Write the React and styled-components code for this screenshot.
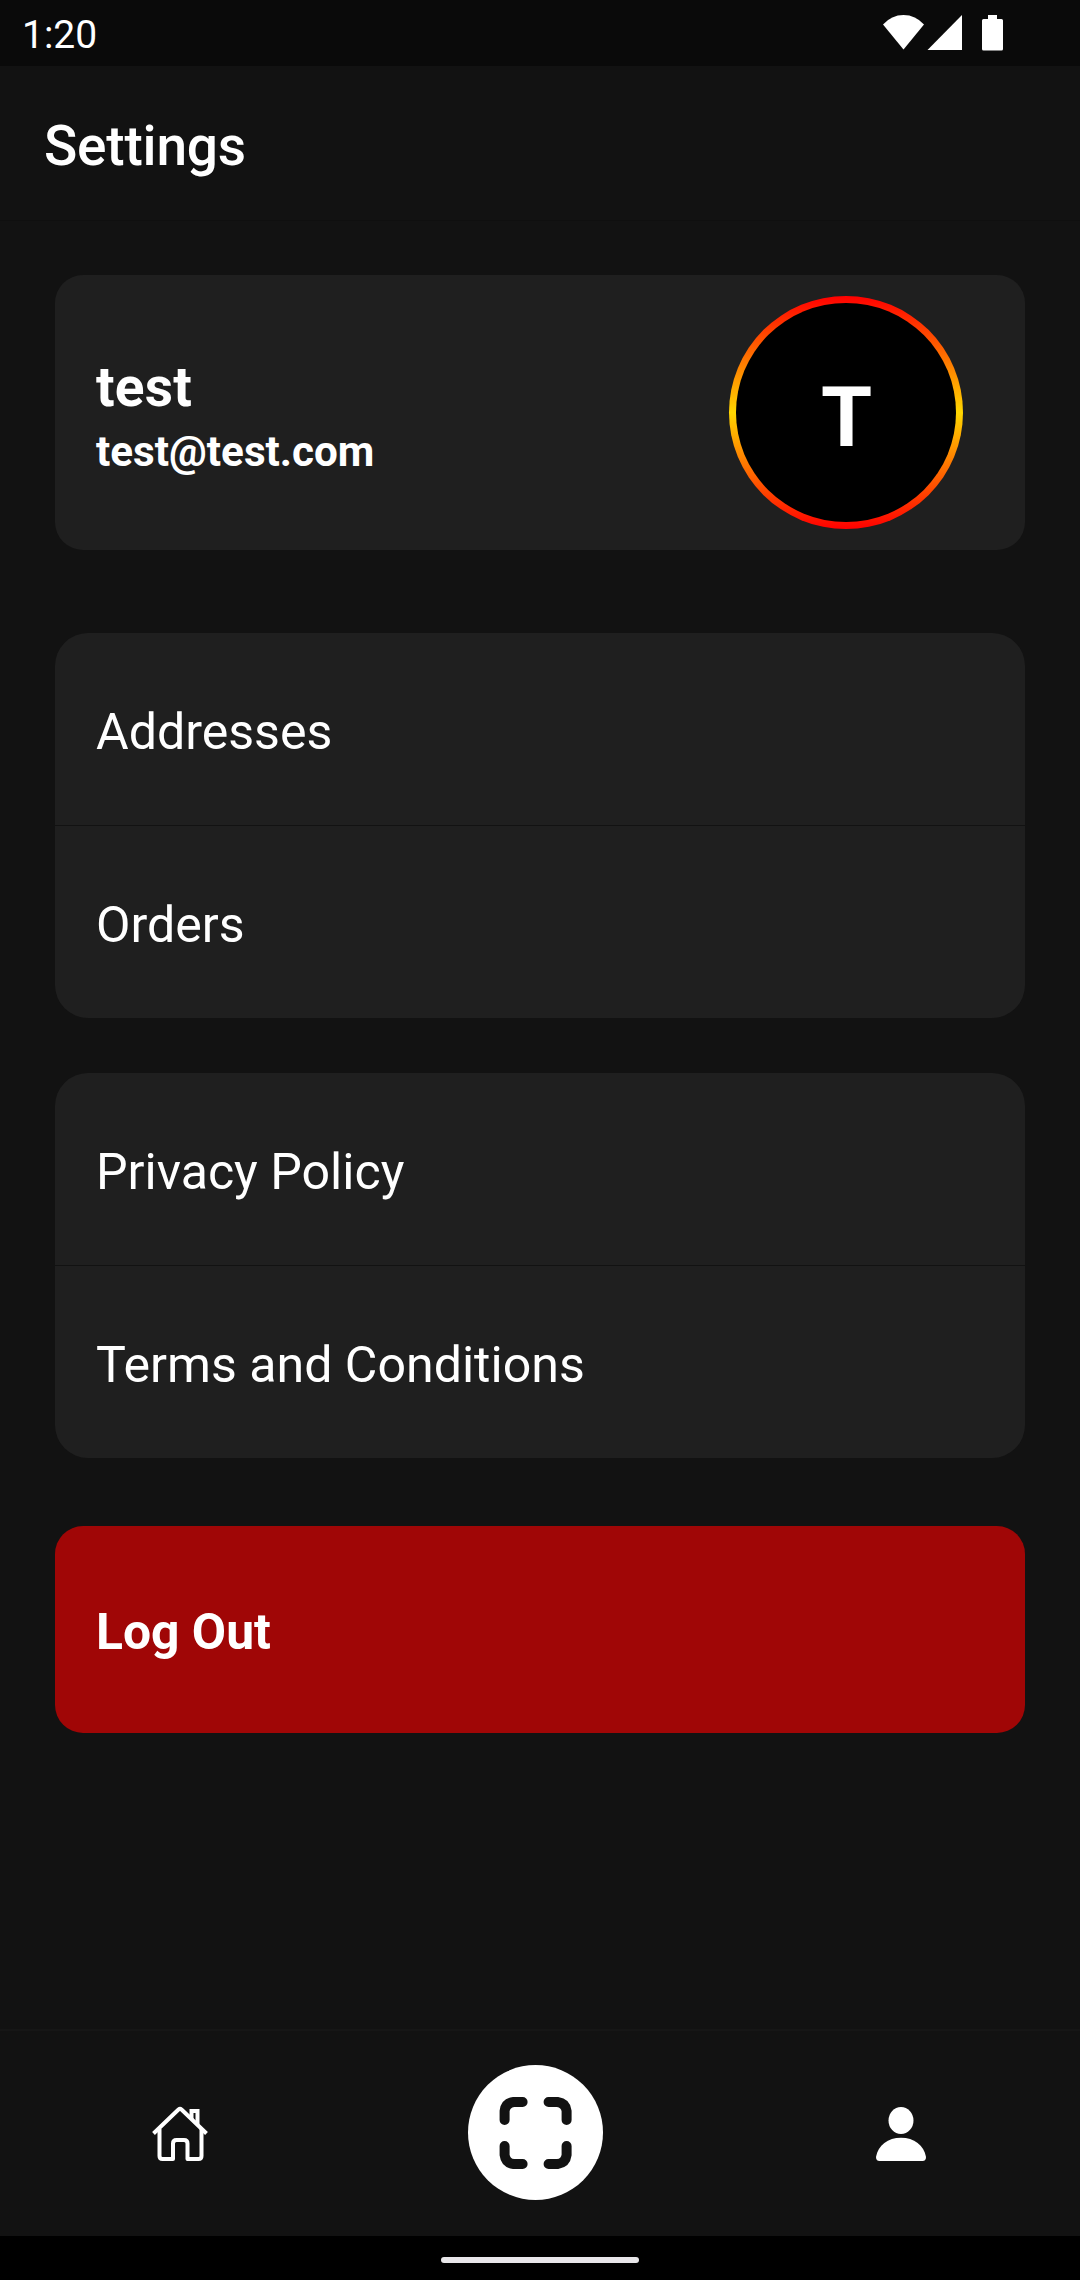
import React from "react";
import styled, { createGlobalStyle } from "styled-components";

const GlobalStyle = createGlobalStyle`
  * { box-sizing: border-box; }
  body { margin: 0; background: #121212; }
`;

const Screen = styled.div`
  display: flex;
  flex-direction: column;
  width: 1080px;
  height: 2280px;
  background: #121212;
  color: #fff;
  font-family: Roboto, "Liberation Sans", sans-serif;
`;

const StatusBar = styled.div`
  display: flex;
  align-items: flex-start;
  justify-content: space-between;
  height: 66px;
  padding: 14px 76px 0 22px;
  background: #0a0a0a;
`;

const Clock = styled.span`
  margin-top: -2px;
  font-size: 39px;
  line-height: 46px;
`;

const Header = styled.header`
  display: flex;
  align-items: center;
  height: 155px;
  padding: 6px 44px 0;
  border-bottom: 1px solid #0f0f0f;
`;

const Title = styled.h1`
  margin: 0;
  font-size: 55px;
  font-weight: 500;
  line-height: 64px;
  letter-spacing: -0.2px;
`;

const Content = styled.main`
  display: flex;
  flex: 1;
  flex-direction: column;
  padding: 54px 55px 0;
`;

const ProfileCard = styled.section`
  display: flex;
  align-items: center;
  justify-content: space-between;
  height: 275px;
  padding: 0 62px 0 41px;
  border-radius: 28px;
  background: #1f1f1f;
`;

const ProfileText = styled.div`
  display: flex;
  flex-direction: column;
  padding-top: 12px;
`;

const Name = styled.span`
  font-size: 55px;
  font-weight: 700;
  line-height: 65px;
  letter-spacing: 0.2px;
`;

const Email = styled.span`
  font-size: 42.2px;
  font-weight: 700;
  line-height: 63px;
`;

const Avatar = styled.div`
  display: flex;
  width: 234px;
  height: 233px;
  padding: 7px;
  border-radius: 50%;
  background: linear-gradient(#ff0000, #ffd700, #ff0000);
`;

const Initial = styled.div`
  display: flex;
  flex: 1;
  align-items: center;
  justify-content: center;
  padding: 10px 0 0 1px;
  border-radius: 50%;
  background: #000;
  font-size: 82.5px;
  font-weight: 700;
`;

const Group = styled.section`
  display: flex;
  flex-direction: column;
  height: 385px;
  margin-top: ${(p) => p.$top}px;
  border-radius: 33px;
  background: #1f1f1f;
`;

const Item = styled.div`
  display: flex;
  flex: 1;
  align-items: center;
  padding: 6px 41px 0;
  font-size: 50.1px;
  & + & {
    border-top: 1px solid #121212;
  }
`;

const LogOut = styled.button`
  display: flex;
  align-items: center;
  height: 207px;
  margin-top: 68px;
  padding: 5px 41px 0;
  border: 0;
  border-radius: 28px;
  background: #a00606;
  color: #fff;
  font: 700 49.8px Roboto, "Liberation Sans", sans-serif;
`;

const TabBar = styled.nav`
  display: grid;
  grid-template-columns: 360px 351px 1fr;
  height: 207px;
  border-top: 2px solid #161616;
`;

const Tab = styled.div`
  display: flex;
  align-items: center;
  justify-content: center;
  padding: ${(p) => p.$pad || "0"};
`;

const ScanButton = styled.div`
  display: flex;
  align-items: center;
  justify-content: center;
  width: 135px;
  height: 135px;
  border-radius: 50%;
  background: #fff;
`;

const GestureBar = styled.footer`
  display: flex;
  justify-content: center;
  height: 44px;
  padding-top: 21px;
  background: #000;
`;

const Handle = styled.div`
  width: 198px;
  height: 6px;
  border-radius: 3px;
  background: #e8e6e9;
`;

const StatusIcons = () => (
  <svg width="121" height="38" viewBox="0 0 121 38" fill="#fff">
    <path d="M0 10.500Q8.500 1 20.500 1Q32.500 1 41 10.500L20.500 35.500Z" />
    <path d="M44.500 36L79 1V36Z" />
    <path d="M105 1h9v4h4.500q1.500 0 1.500 1.500v28.500q0 1.500-1.500 1.500h-18q-1.500 0-1.500-1.500v-28.500q0-1.500 1.500-1.500h4.500Z" />
  </svg>
);

const HomeIcon = () => (
  <svg width="56" height="56" viewBox="0 0 56 56" fill="none" stroke="#fff" strokeWidth="4" strokeLinejoin="round">
    <path d="M1.500 27.500L26.500 3.500Q28 2.200 29.500 3.500L54.500 27.500" />
    <path d="M7.500 23V50Q7.500 53 10.500 53H21V37.500Q21 34 24.500 34H32Q35.500 34 35.500 37.500V53H46.500Q49.500 53 49.500 50V23" />
    <path d="M39.500 13V5H45.500V18.500" strokeLinejoin="miter" />
  </svg>
);

const ScanIcon = () => (
  <svg width="73" height="73" viewBox="-0.6 -1 73 73" fill="none" stroke="#121212" strokeWidth="10" strokeLinecap="round">
    <path d="M5 23V14Q6 6 14 5H23" />
    <path d="M49 5H58Q66 6 67 14V23" />
    <path d="M67 49V58Q66 66 58 67H49" />
    <path d="M23 67H14Q6 66 5 58V49" />
  </svg>
);

const PersonIcon = () => (
  <svg width="50" height="54" viewBox="0 0 50 54" fill="#fff">
    <ellipse cx="25" cy="13.500" rx="12.500" ry="13.500" />
    <path d="M0 50C2 38 12 30.700 25 30.700S48 38 50 50Q50 54 46.500 54H3.500Q0 54 0 50Z" />
  </svg>
);

export default function App() {
  return (
    <Screen>
      <GlobalStyle />
      <StatusBar>
        <Clock>1:20</Clock>
        <StatusIcons />
      </StatusBar>
      <Header>
        <Title>Settings</Title>
      </Header>
      <Content>
        <ProfileCard>
          <ProfileText>
            <Name>test</Name>
            <Email>test@test.com</Email>
          </ProfileText>
          <Avatar>
            <Initial>T</Initial>
          </Avatar>
        </ProfileCard>
        <Group $top={83}>
          <Item>Addresses</Item>
          <Item>Orders</Item>
        </Group>
        <Group $top={55}>
          <Item>Privacy Policy</Item>
          <Item>Terms and Conditions</Item>
        </Group>
        <LogOut>Log Out</LogOut>
      </Content>
      <TabBar>
        <Tab $pad="1px 0 0">
          <HomeIcon />
        </Tab>
        <Tab $pad="0 0 2px">
          <ScanButton>
            <ScanIcon />
          </ScanButton>
        </Tab>
        <Tab $pad="1px 0 0 10px">
          <PersonIcon />
        </Tab>
      </TabBar>
      <GestureBar>
        <Handle />
      </GestureBar>
    </Screen>
  );
}
